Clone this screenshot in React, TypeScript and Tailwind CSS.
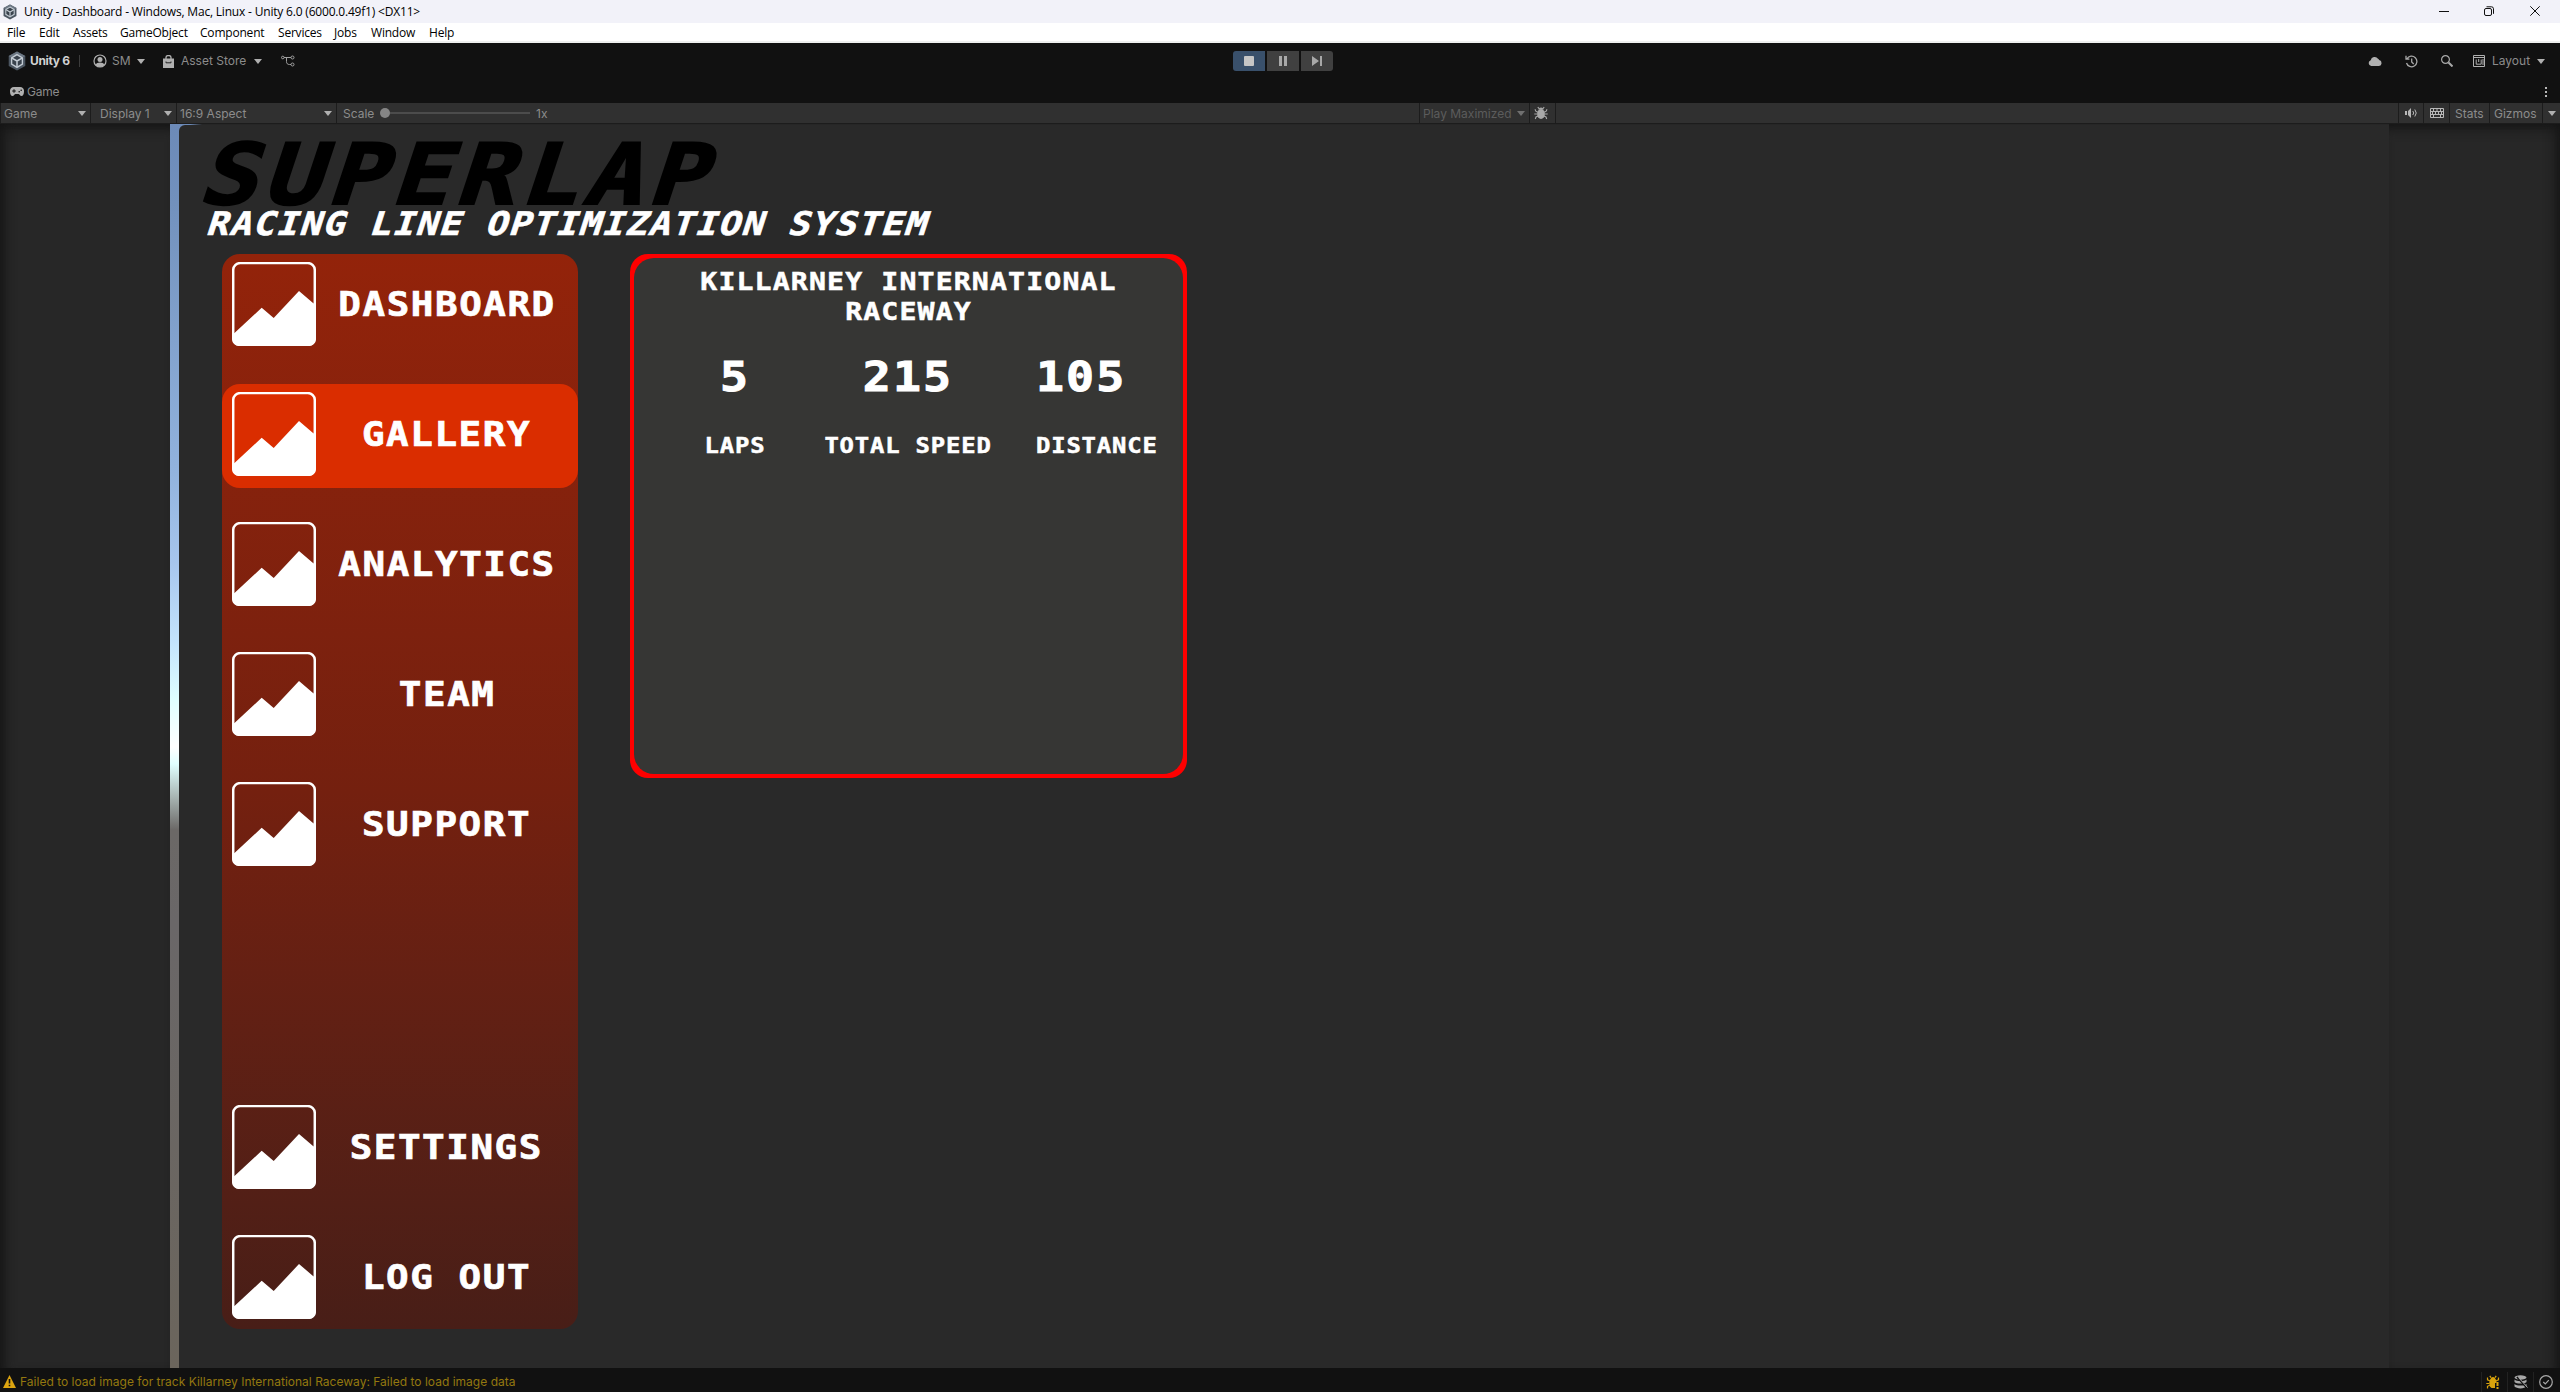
import React from "react";

const Arrow = ({ className = "" }: { className?: string }) => (
  <svg viewBox="0 0 8 5" className={`h-[5px] w-2 shrink-0 fill-[#b0b0b0] ${className}`}>
    <path d="M0 0h8L4 5z" />
  </svg>
);

const UnityCube = ({ className = "" }: { className?: string }) => (
  <svg viewBox="0 0 18 20" className={`shrink-0 ${className}`}>
    <path d="M9 .5 17.3 5v10L9 19.5.7 15V5z" fill="#4b5560" />
    <path d="M9 .5 17.3 5 9 9.7.7 5z" fill="#6d7884" />
    <path d="M9 3.6 14.4 6.8v6.2L9 16.4 3.6 13V6.8z" fill="#39424c" stroke="#c3cbd3" strokeWidth="1.4" />
    <path d="M9 10v6M9 10 4 7.2M9 10l5-2.8" stroke="#c3cbd3" strokeWidth="1.5" fill="none" />
  </svg>
);

const PictureIcon = () => (
  <svg viewBox="0 0 84 84" className="size-[84px] shrink-0">
    <rect x="1.2" y="1.1" width="81.6" height="81.8" rx="7" fill="none" stroke="#fff" strokeWidth="2.5" />
    <path d="M1 72 3 70.6 29.7 45.7 41.7 56 67 29 81.3 41.2 84 42V77a7 7 0 0 1-7 7H7a7 7 0 0 1-7-7V72z" fill="#fff" />
  </svg>
);

const Bug = ({ className = "" }: { className?: string }) => (
  <svg viewBox="0 0 14 14" className={`size-[14px] shrink-0 ${className}`}>
    <ellipse cx="7" cy="8" rx="3.9" ry="5" fill="currentColor" />
    <path d="M4.3 3.6a2.8 2.8 0 0 1 5.4 0z" fill="currentColor" />
    <path d="M3.8 1 5 2.6M10.2 1 9 2.6M1 3.2l.8 2 2 1M13 3.2l-.8 2-2 1M.3 8h3M13.700 8h-3M1.300 13l.7-2 2-1M12.700 13l-.7-2-2-1" stroke="currentColor" strokeWidth="1.100" fill="none" />
  </svg>
);

const menus: [string, string][] = [
  ["File", "w-8"],
  ["Edit", "w-[34px]"],
  ["Assets", "w-[47px]"],
  ["GameObject", "w-20"],
  ["Component", "w-[78px]"],
  ["Services", "w-14"],
  ["Jobs", "w-[37px]"],
  ["Window", "w-[58px]"],
  ["Help", "w-[30px]"],
];

function TitleBar() {
  return (
    <div className="flex h-[23px] items-center bg-[#f2f2f9] pl-[3px] text-black">
      <UnityCube className="h-4 w-[14px]" />
      <span className="ml-[7px] whitespace-nowrap font-['Open_Sans','Noto_Sans',sans-serif] text-[12px] leading-none tracking-[-0.19px]">
        Unity - Dashboard - Windows, Mac, Linux - Unity 6.0 (6000.0.49f1) &lt;DX11&gt;
      </span>
      <div className="ml-auto flex h-full items-center pb-0.5 pr-5">
        <svg viewBox="0 0 10 10" className="mr-[35px] size-[10px]" stroke="#111" fill="none"><path d="M0 5.500h10" /></svg>
        <svg viewBox="0 0 10 10" className="mr-9 size-[10px]" stroke="#111" fill="none">
          <rect x=".5" y="2.500" width="7" height="7" rx="1.500" /><path d="M2.500 .8h5a2 2 0 0 1 2 2v5" />
        </svg>
        <svg viewBox="0 0 10 10" className="size-[10px]" stroke="#111" fill="none"><path d="m.3.300 9.400 9.400M9.700.300.300 9.700" /></svg>
      </div>
    </div>
  );
}

function MenuBar() {
  return (
    <div className="flex h-5 items-center border-b-2 border-[#eef0ef] bg-white pl-[7px] font-['Open_Sans','Noto_Sans',sans-serif] text-[12px] leading-none tracking-[-0.2px] text-black">
      {menus.map(([label, w]) => (
        <span key={label} className={`shrink-0 whitespace-nowrap pt-px ${w}`}>{label}</span>
      ))}
    </div>
  );
}

function MainToolbar() {
  return (
    <div className="grid h-[36px] grid-cols-[1233px_100px_1fr] items-center text-[12px] text-[#8c8c8c]">
      <div className="flex items-center pl-2">
        <UnityCube className="h-[20px] w-[18px]" />
        <span className="ml-[4px] w-[49px] whitespace-nowrap text-[12px] font-bold tracking-[-0.35px] text-[#d2d2d2]">Unity 6</span>
        <span className="h-3 w-px bg-[#3c3c3c]" />
        <svg viewBox="0 0 14 14" className="ml-[13px] size-[14px]">
          <circle cx="7" cy="7" r="6" fill="none" stroke="#b0b0b0" strokeWidth="1.200" />
          <circle cx="7" cy="5.600" r="2.500" fill="#b0b0b0" />
          <path d="M2.600 11c.6-2 2.400-2.600 4.400-2.600s3.800.6 4.400 2.600A6 6 0 0 1 7 13a6 6 0 0 1-4.400-2z" fill="#b0b0b0" />
        </svg>
        <span className="ml-[5px] w-[25px]">SM</span>
        <Arrow />
        <svg viewBox="0 0 11 13" className="ml-[18px] h-[13px] w-[11px]">
          <path d="M0 3.500h11V13H0z" fill="#b0b0b0" />
          <path d="M3 4V2.500a2.500 2 0 0 1 5 0V4" fill="none" stroke="#b0b0b0" strokeWidth="1.300" />
          <path d="M3 6.500v1.300h5V6.500" fill="none" stroke="#222" strokeWidth="1" />
        </svg>
        <span className="ml-[7px] w-[73px] whitespace-nowrap">Asset Store</span>
        <Arrow />
        <svg viewBox="0 0 14 12" className="ml-[19px] h-3 w-[14px]" fill="none" stroke="#a0a0a0">
          <circle cx="1.800" cy="2.500" r="1.300" /><circle cx="11.500" cy="2.500" r="1.500" /><circle cx="11.500" cy="9.500" r="1.500" />
          <path d="M3 2.500h7M5.500 2.500v4c0 2 1 3 3 3H10" />
        </svg>
      </div>
      <div className="flex gap-0.5">
        <div className="flex h-5 w-8 items-center justify-center rounded-l-[3px] bg-[#39506b]"><span className="size-[10px] rounded-[1px] bg-[#c6c6c6]" /></div>
        <div className="flex h-5 w-8 items-center justify-center gap-0.5 bg-[#404040]"><span className="h-[10px] w-[3px] bg-[#a8a8a8]" /><span className="h-[10px] w-[3px] bg-[#a8a8a8]" /></div>
        <div className="flex h-5 w-8 items-center justify-center rounded-r-[3px] bg-[#404040]">
          <svg viewBox="0 0 10 10" className="size-[10px] fill-[#a8a8a8]"><path d="M0 0l7 5-7 5zM8 0h2v10H8z" /></svg>
        </div>
      </div>
      <div className="flex items-center justify-end pr-[15px]">
        <svg viewBox="0 0 14 10" className="mr-[23px] h-[10px] w-[14px] fill-[#b0b0b0]">
          <path d="M3.200 10A3 3 0 0 1 2.700 4.200 4 4 0 0 1 10 2.800a3 3 0 0 1 1.200 1.300A3 3 0 0 1 11 10z" />
        </svg>
        <svg viewBox="0 0 13 13" className="mr-[23px] size-[13px]" fill="none" stroke="#a8a8a8" strokeWidth="1.300">
          <path d="M2 3.800A5.300 5.300 0 1 1 1.500 8M1 .8v3.400h3.400M6.700 3.500V7l2 2" />
        </svg>
        <svg viewBox="0 0 12 12" className="mr-[20px] size-3" fill="none" stroke="#a8a8a8">
          <circle cx="4.500" cy="4.500" r="3.900" strokeWidth="1.200" /><path d="m7.500 7.500 4 4" strokeWidth="2" />
        </svg>
        <svg viewBox="0 0 12 12" className="mr-[7px] size-3" fill="none" stroke="#b0b0b0">
          <path d="M.5.500h11v11H.5zM.5 2.500h11M3.200 4.500v4.700h5V4.500M5.700 4v3M10 4v6" />
        </svg>
        <span className="w-[45px]">Layout</span>
        <Arrow />
      </div>
    </div>
  );
}

function TabRow() {
  return (
    <div className="flex h-6 items-center pl-[10px] pt-px text-[12px] text-[#8c8c8c]">
      <svg viewBox="0 0 14 9" className="h-[9px] w-[14px]">
        <path d="M4 0h6a4 4 0 0 1 4 4.500C14 7 13 9 11.500 9 10 9 9.500 7 8.500 7h-3C4.500 7 4 9 2.500 9 1 9 0 7 0 4.500A4 4 0 0 1 4 0z" fill="#b0b0b0" />
        <path d="M2.200 4h3.600M4 2.200v3.600" stroke="#111" strokeWidth="1" /><circle cx="9.200" cy="4.700" r=".8" fill="#111" /><circle cx="11.200" cy="3.300" r=".8" fill="#111" />
      </svg>
      <span className="ml-[3px] tracking-[-0.2px]">Game</span>
      <svg viewBox="0 0 2 10" className="ml-auto mr-[13px] h-[10px] w-0.5 fill-[#b8b8b8]"><path d="M0 0h2v2H0zM0 4h2v2H0zM0 8h2v2H0z" /></svg>
    </div>
  );
}

function GameToolbar() {
  return (
    <div className="flex h-[21px] items-stretch border-b border-[#1c1c1c] bg-[#303030] text-[12px] leading-[21px] text-[#8c8c8c]">
      <div className="flex w-[91px] items-center justify-between border-x border-[#1c1c1c] pl-[3px] pr-1"><span>Game</span><Arrow /></div>
      <div className="flex w-[86px] items-center justify-between border-r border-[#1c1c1c] pl-[9px] pr-1"><span>Display 1</span><Arrow /></div>
      <div className="flex w-[160px] items-center justify-between border-r border-[#1c1c1c] pl-[3px] pr-1"><span>16:9 Aspect</span><Arrow /></div>
      <div className="flex items-center pl-[6px]">
        <span className="w-[37px]">Scale</span>
        <span className="size-[10px] rounded-full bg-[#858585]" />
        <span className="h-0.5 w-[140px] bg-[#4c4c4c]" />
        <span className="ml-[6px]">1x</span>
      </div>
      <div className="ml-auto flex w-[1141px] items-stretch border-l border-[#1c1c1c]">
        <div className="flex w-[110px] items-center justify-between border-r border-[#1c1c1c] pl-[3px] pr-1 text-[#5c5c5c]"><span>Play Maximized</span><Arrow className="opacity-50" /></div>
        <div className="flex w-[26px] items-center justify-center border-r border-[#1c1c1c] pr-1 text-[#a8a8a8]"><Bug /></div>
        <div className="ml-auto flex w-[26px] items-center justify-center border-x border-[#1c1c1c]">
          <svg viewBox="0 0 12 10" className="h-[10px] w-3" fill="none" stroke="#b8b8b8"><path d="M0 3h2v4H0zM3 3l3-3v10L3 7z" fill="#b8b8b8" stroke="none" /><path d="M7.800 3a3 3 0 0 1 0 4M9.800 1.500a5.500 5.500 0 0 1 0 7" /></svg>
        </div>
        <div className="flex w-[26px] items-center justify-center border-r border-[#1c1c1c]">
          <svg viewBox="0 0 14 10" className="h-[10px] w-[14px]" fill="none" stroke="#b8b8b8"><path d="M.5.500h13v9H.5zM.5 3.500h13M.5 6.500h13M3.500.500v3M7 .500v3M10.500.500v3M2.500 3.500v3M5.500 3.500v3M8.500 3.500v3M11.500 3.500v3M3.500 6.500v3M10.500 6.500v3" /></svg>
        </div>
        <div className="w-10 border-r border-[#1c1c1c] pl-[5px]">Stats</div>
        <div className="w-[52px] pl-1">Gizmos</div>
        <div className="flex w-[18px] items-center justify-center border-l border-[#1c1c1c]"><Arrow /></div>
      </div>
    </div>
  );
}

const NavItem = ({ label, active = false }: { label: string; active?: boolean }) => (
  <div className={`flex h-[104px] shrink-0 items-start rounded-[18px] pl-[10px] pt-2 ${active ? "bg-[#da2d00]" : ""}`}>
    <PictureIcon />
    <div className="flex h-[85px] w-[260px] items-center justify-center">
      <span className="mr-[-1.400px] scale-x-[1.12] whitespace-nowrap font-['DejaVu_Sans_Mono',monospace] text-[33.5px] font-bold leading-none tracking-[1.4px] text-white [-webkit-text-stroke:0.7px_white]">{label}</span>
    </div>
  </div>
);

function Sidebar() {
  return (
    <nav className="flex h-[1075px] w-[356px] flex-col gap-[26px] rounded-[18px] bg-linear-to-b from-[#93230a] via-[#74200f] to-[#481e17]">
      <NavItem label="DASHBOARD" />
      <NavItem label="GALLERY" active />
      <NavItem label="ANALYTICS" />
      <NavItem label="TEAM" />
      <NavItem label="SUPPORT" />
      <div className="mt-auto -mb-[2px] flex flex-col gap-[26px]">
        <NavItem label="SETTINGS" />
        <NavItem label="LOG OUT" />
      </div>
    </nav>
  );
}

function TrackCard() {
  return (
    <section className="h-[524px] w-[557px] rounded-[18px] bg-[#fe0000] p-1 font-['DejaVu_Sans_Mono',monospace] font-bold text-white [-webkit-text-stroke:0.5px_white]">
      <div className="flex h-full flex-col rounded-[20px] bg-[#363634] pt-[9px]">
        <h2 className="scale-x-[1.12] text-center text-[25.2px] leading-[29.5px] tracking-[1px]">
          KILLARNEY INTERNATIONAL<br />RACEWAY
        </h2>
        <div className="mt-[30px] grid grid-cols-[202px_144px_1fr] text-[41.500px] leading-[42px] tracking-[1.9px] [-webkit-text-stroke:1px_white]">
          <span className="scale-x-[1.12] text-center">5</span>
          <span className="scale-x-[1.12] text-center">215</span>
          <span className="origin-left scale-x-[1.12] pl-[50px]">105</span>
        </div>
        <div className="mt-[36px] grid grid-cols-[202px_144px_1fr] text-[21.300px] leading-[24px] tracking-[0.75px]">
          <span className="scale-x-[1.12] text-center">LAPS</span>
          <span className="flex scale-x-[1.12] justify-center whitespace-nowrap">TOTAL SPEED</span>
          <span className="origin-left scale-x-[1.12] pl-[50px]">DISTANCE</span>
        </div>
      </div>
    </section>
  );
}

function GameView() {
  return (
    <div className="flex h-[1244px] bg-[#282828]">
      <div className="w-[170px] bg-[#272727] shadow-[inset_12px_0_12px_-8px_#151515,inset_0_12px_12px_-8px_#151515]" />
      <div className="flex w-[2219px] bg-[linear-gradient(90deg,transparent_20px,#262626_32px),linear-gradient(180deg,#6c8ab8_0px,#7291bd_80px,#92b3de_350px,#a7c6ed_440px,#c4e4fd_520px,#dfffff_575px,#ffffff_623px,#e0ffff_640px,#a8b5b3_673px,#6b6866_706px,#6a6768_800px,#6b655c_1244px)] pl-[9px] pt-px">
        <div className="flex-1 rounded-tl-[6px] bg-[#292929]">
          <header className="flex flex-col items-start pl-[28px] pt-[10px] font-['DejaVu_Sans_Mono',monospace] font-bold">
            <h1 className="-ml-[14px] origin-bottom-left skew-x-[-16deg] scale-x-[1.152] whitespace-nowrap text-[84.500px] leading-[80px] tracking-[4.800px] text-black [-webkit-text-stroke:2px_black]">SUPERLAP</h1>
            <p className="-ml-1 -mt-[9px] origin-bottom-left skew-x-[-16deg] scale-x-[1.12] whitespace-nowrap text-[32.500px] leading-[36px] tracking-[1.2px] text-white [-webkit-text-stroke:0.6px_white]">RACING LINE OPTIMIZATION SYSTEM</p>
          </header>
          <main className="mt-[12px] flex items-start gap-[52px] pl-[43px]">
            <Sidebar />
            <TrackCard />
          </main>
        </div>
      </div>
      <div className="flex-1 bg-[#272727] shadow-[inset_-12px_0_12px_-8px_#151515,inset_0_12px_12px_-8px_#151515]" />
    </div>
  );
}

function StatusBar() {
  return (
    <div className="flex h-6 items-center bg-[#111111] pl-[3px] pt-[3px] text-[12px] leading-none text-[#94780f]">
      <svg viewBox="0 0 13 13" className="h-[13px] w-[13px]"><path d="M6.500 0 13 13H0z" fill="#dca410" /><path d="M6.500 4v4.500M6.500 9.800v1.500" stroke="#111" strokeWidth="1.600" /></svg>
      <span className="ml-1 whitespace-nowrap tracking-[0.015px]">Failed to load image for track Killarney International Raceway: Failed to load image data</span>
      <div className="ml-auto flex h-5 w-[79px] items-center">
        <div className="flex h-full w-[26px] items-center justify-center border-l border-[#222] pr-1 text-[#d9a30c]">
          <svg viewBox="0 0 14 14" className="size-[14px]">
            <path d="M4.500 4a2.600 2.600 0 0 1 5 0l1 2v2H9v5H6.500C4 13 3.300 10.500 3.300 8c0-1.600.4-3 1.200-4z" fill="currentColor" />
            <path d="M3.800.8 5 2.600M10.200.8 9 2.600M1.500 2.500v2.300l2.300 1M12.500 2.500v2.300l-2.300 1M.3 8.500h3M1.500 13.500v-2.200l2.300-1" stroke="currentColor" strokeWidth="1.200" fill="none" />
            <path d="M11.500 7v4M11.500 12v2" stroke="currentColor" strokeWidth="2" />
          </svg>
        </div>
        <div className="flex h-full w-[26px] items-center justify-center border-l border-[#222]">
          <svg viewBox="0 0 14 14" className="size-[14px]"><ellipse cx="6.500" cy="2.500" rx="6" ry="2.200" fill="#a8a8a8" /><path d="M.5 4.500c2 2 10 2 12 0v2.600c-2 2-10 2-12 0zM.5 9c2 2 10 2 12 0v2.600c-2 2.400-10 2.400-12 0z" fill="#a8a8a8" /><path d="m3 2 10.500 11.500" stroke="#111" strokeWidth="1.800" /><path d="m4.500 2.500 9 10" stroke="#a8a8a8" /></svg>
        </div>
        <div className="flex h-full w-[27px] items-center justify-center border-l border-[#222] pr-0.5">
          <svg viewBox="0 0 14 14" className="size-[14px]" fill="none" stroke="#a8a8a8" strokeWidth="1.200"><circle cx="7" cy="7" r="6.300" /><path d="m4.300 7 2 2 3.500-3.800" /></svg>
        </div>
      </div>
    </div>
  );
}

export default function App() {
  return (
    <div className="flex h-[1392px] w-[2560px] flex-col overflow-hidden bg-[#111111] font-[Inter,sans-serif]">
      <TitleBar />
      <MenuBar />
      <MainToolbar />
      <TabRow />
      <GameToolbar />
      <GameView />
      <StatusBar />
    </div>
  );
}
